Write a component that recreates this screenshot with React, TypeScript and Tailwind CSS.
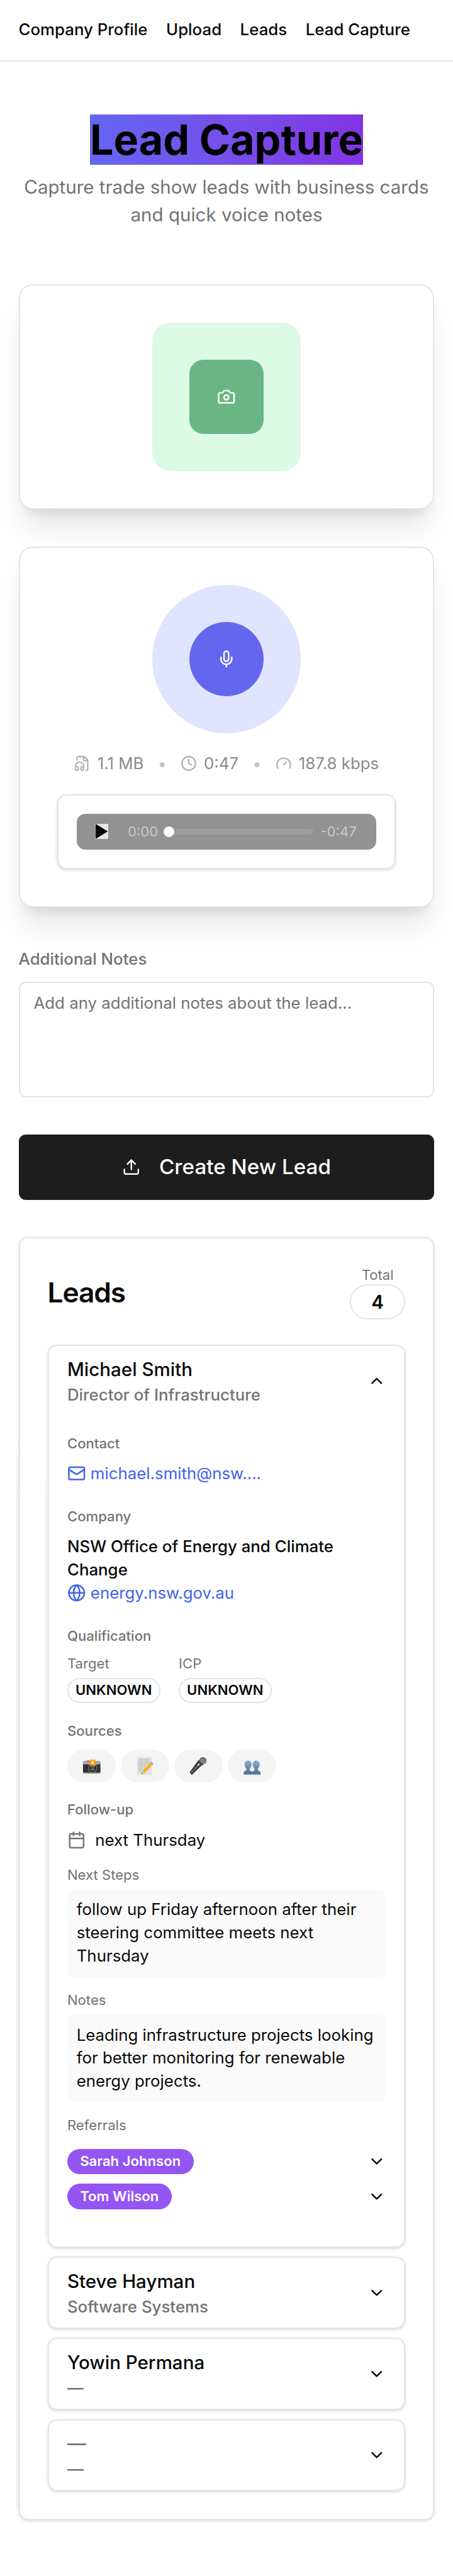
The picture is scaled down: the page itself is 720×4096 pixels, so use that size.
import type { ReactNode } from "react";
import { Calendar, Camera, ChevronDown, ChevronUp, Clock, FileHeadphone, Gauge, Globe, Mail, Mic, Upload } from "lucide-react";

const EDGE = "border-[1.1px] border-[#e4e4e4]";

function EdgeShade({ top }: { top: string }) {
  return <span className={`absolute -left-[3px] bottom-2 w-[2px] bg-linear-to-b from-transparent to-[#f1f1f1] to-[60px] ${top}`} />;
}

function Header() {
  return (
    <header className="flex h-[53px] items-center gap-4 border-b-[1.1px] border-[#e4e4e4] px-4 text-sm font-medium">
      <a>Company Profile</a>
      <a>Upload</a>
      <a>Leads</a>
      <a>Lead Capture</a>
    </header>
  );
}

function Label({ children, strong = true }: { children: ReactNode; strong?: boolean }) {
  return <div className={strong ? "text-xs font-medium text-[#737373]" : "text-xs text-[#737373]"}>{children}</div>;
}

function CaptureCards() {
  return (
    <>
      <section className={`mt-12 flex h-[194px] items-center justify-center rounded-xl bg-white shadow-xl ${EDGE}`}>
        <div className="flex size-32 items-center justify-center rounded-2xl bg-[#dcfae4]">
          <div className="flex size-16 items-center justify-center rounded-xl bg-[#69b684] text-white">
            <Camera size={16} />
          </div>
        </div>
      </section>

      <section className={`mt-8 flex h-[311px] flex-col items-center rounded-xl bg-white px-8 pt-8 shadow-xl ${EDGE}`}>
        <div className="flex size-32 items-center justify-center rounded-full bg-[#e0e4fe]">
          <div className="flex size-16 items-center justify-center rounded-full bg-[#6467ee] text-white">
            <Mic size={16} />
          </div>
        </div>
        <div className="mt-4 flex items-center gap-3 text-sm text-[#8b8b8b]">
          <span className="flex items-center gap-1.5"><FileHeadphone size={14} className="text-[#b0b0b0]" />1.1 MB</span>
          <span className="text-[#c6c6c6]">•</span>
          <span className="flex items-center gap-1.5"><Clock size={14} className="text-[#b0b0b0]" />0:47</span>
          <span className="text-[#c6c6c6]">•</span>
          <span className="flex items-center gap-1.5"><Gauge size={14} className="text-[#b0b0b0]" />187.8 kbps</span>
        </div>
        <div className={`relative mt-[16.3px] h-[65px] w-full rounded-lg p-[15.9px] shadow-sm ${EDGE}`}>
          <EdgeShade top="top-3" />
          <div className="flex h-[31px] items-center rounded-[7.5px] bg-[#929292] pl-4 pr-[17px] text-xs text-[#c9c9c9]">
            <div className="flex h-[13px] w-[11px] items-center bg-[#e5e5e5]">
              <svg viewBox="0 0 11 13" className="h-[13px] w-[11px]"><path d="M.4.6 1 .3 11 6.5 1 12.7.4 12.4Z" fill="#000" /></svg>
            </div>
            <span className="ml-[17px] w-[26px]">0:00</span>
            <div className="ml-[5px] flex h-[5px] w-[129px] items-center rounded-full bg-[#9e9e9e]">
              <div className="size-[9px] rounded-full bg-white" />
            </div>
            <span className="ml-auto">-0:47</span>
          </div>
        </div>
      </section>
    </>
  );
}

function Badge({ children }: { children: ReactNode }) {
  return <div className={`mt-1 flex h-[22px] w-20 items-center justify-center rounded-full text-xs font-semibold ${EDGE}`}>{children}</div>;
}

function SourcePill({ children }: { children: ReactNode }) {
  return (
    <span className="flex h-7 w-[42px] items-center justify-center rounded-full bg-[#f4f4f4]">
      <svg viewBox="0 0 32 32" className="size-4 overflow-visible">{children}</svg>
    </span>
  );
}

function Sources() {
  return (
    <div className="mt-2 flex gap-1">
      <SourcePill>
        <path d="M1 10q0-2 2-2h4l1-1h4l1 1h16q2 0 2 2v17.5q0 1.5-2 1.5H3q-2 0-2-1.5Z" fill="#2f2f2f" />
        <path d="M1 10q0-2 2-2h26q2 0 2 2v3.5H1Z" fill="#a8a8a8" />
        <path d="M1 27h30v.5q0 1.5-2 1.5H3q-2 0-2-1.5Z" fill="#8a8a8a" />
        <circle cx="17.5" cy="20.5" r="7.8" fill="#777" />
        <circle cx="17.5" cy="20.5" r="6.4" fill="#26282c" />
        <circle cx="17.5" cy="20.5" r="3.8" fill="#4c545e" />
        <path d="M14 22q3.5 3 7 0" stroke="#9aa3ad" strokeWidth=".9" fill="none" />
        <path d="m17 3 1.5 4.2L22.5 4l-1 4.800 4-.3-3 3 3 3.400-4.400-.5-.7 4-3-3.200-3.400 3-.4-4.400-4.600.3 3.400-3.300L9 8l4.600.4L13.500 4l3 3Z" fill="#f59a23" />
        <circle cx="17.3" cy="10.7" r="2.6" fill="#ffe86a" />
        <circle cx="27" cy="12" r="1" fill="#f2b92c" />
      </SourcePill>
      <SourcePill>
        <path d="M2 1h25.7v31H2Z" fill="#e2e2e2" />
        <path d="M4.5 5.5h20M4.5 8.5h18M4.5 11.5h19M4.5 14.5h14M4.5 17.5h12M4.5 20.5h6M4.5 23.5h7M4.5 26.5h5" stroke="#8e8e8e" strokeWidth=".9" strokeDasharray="2.5 1 4 1.2" />
        <path d="m10.2 29.8 1-6L22.7 11.3l5 4.2-11.6 12.3Z" fill="#f3c22e" />
        <path d="m14.5 25.5 11-12" stroke="#dfa01c" strokeWidth="1.5" />
        <path d="m22.7 11.3 1.5-1.6 5 4.3-1.5 1.5Z" fill="#b9b9b9" />
        <path d="m24.2 9.7.8-.6q4.6-.2 4.5 4l-.3.9Z" fill="#e57f86" />
        <path d="m10.2 29.8 1-6 4.9 4Z" fill="#e5c592" />
        <path d="m10.2 29.8.4-2.3 1.7 1.5Z" fill="#333" />
      </SourcePill>
      <SourcePill>
        <path d="m14 8.5 7.5 6.5L5 31q-.6.8-1.5.3L.8 28q-.5-.8.2-1.5Z" fill="#333" />
        <path d="m16.500 11 2.500 2.200L3 29.500 2 28Z" fill="#6f6f6f" />
        <circle cx="23.3" cy="7.2" r="6.3" fill="#6d6d6d" />
        <path d="M18.5 5.5l8 7M20.5 3l8.500 7.500M27.500 2.500l-8 9M29.300 6l-5.500 7" stroke="#a9a9a9" strokeWidth=".8" />
        <path d="m16.2 5.8 8.3 7.4-2.3 2.5-8.5-7.3Z" fill="#4a4a4a" />
        <path d="m17 6.5 7 6.2" stroke="#9c9c9c" strokeWidth=".9" />
        <circle cx="15.7" cy="14" r="1.7" fill="#d8d8d8" />
      </SourcePill>
      <SourcePill>
        <defs>
          <linearGradient id="people" x1="0" y1="0" x2="0" y2="1">
            <stop offset="0" stopColor="#8baed3" />
            <stop offset="1" stopColor="#4d6a92" />
          </linearGradient>
        </defs>
        <path d="M9 7c4 0 6 2.800 6 6.500 0 3-1 5.500-3 7.300V24c2.200.8 4 1.200 4 3 0-1.800 1.800-2.200 4-3v-3.200c-2-1.800-3-4.300-3-7.300C17 9.800 19 7 23 7s6 2.800 6 6.500c0 3-1 5.500-3 7.300V24c3 .9 4.500 1.300 4.500 4v3.500h-29V28c0-2.700 1.500-3.100 4.500-4v-3.200c-2-1.800-3-4.300-3-7.300C3 9.800 5 7 9 7Z" fill="url(#people)" />
        <path d="M1.5 30.5h29v1h-29Z" fill="#a9b6c8" />
      </SourcePill>
    </div>
  );
}

function LeadHead({ name, role, open = false }: { name: string; role: string; open?: boolean }) {
  return (
    <div className="flex items-center justify-between">
      <div>
        <div className={name === "—" ? "text-base font-medium text-[#737373]" : "text-base font-medium"}>{name}</div>
        <div className="text-sm font-medium text-[#737373]">{role}</div>
      </div>
      {open ? <ChevronUp size={16} /> : <ChevronDown size={16} />}
    </div>
  );
}

function LeadCard({ name, role }: { name: string; role: string }) {
  return (
    <div className={`relative mt-2 h-[62px] rounded-lg px-[15.9px] pt-[8.1px] shadow-sm ${EDGE}`}>
      <EdgeShade top="top-3" />
      <LeadHead name={name} role={role} />
    </div>
  );
}

function Referral({ name }: { name: string }) {
  return (
    <div className="flex h-[22px] items-center justify-between">
      <span className="flex h-[22px] items-center rounded-full bg-[#9455f3] px-[11px] text-xs font-semibold text-white">{name}</span>
      <ChevronDown size={16} />
    </div>
  );
}

function OpenLead() {
  return (
    <div className={`relative mt-[22px] h-[778px] rounded-lg px-[15.9px] pt-[8.2px] shadow-sm ${EDGE}`}>
      <EdgeShade top="top-20" />
      <LeadHead name="Michael Smith" role="Director of Infrastructure" open />

      <div className="mt-[23.9px]"><Label>Contact</Label></div>
      <a className="mt-2 flex items-center gap-1 text-sm text-[#4163eb]"><Mail size={16} />michael.smith@nsw....</a>

      <div className="mt-[19px]"><Label>Company</Label></div>
      <div className="mt-2 text-sm font-medium">NSW Office of Energy and Climate<br />Change</div>
      <a className="flex items-center gap-1 text-sm text-[#4163eb]"><Globe size={16} />energy.nsw.gov.au</a>

      <div className="mt-[19px]"><Label>Qualification</Label></div>
      <div className="mt-2 flex gap-4">
        <div><Label strong={false}>Target</Label><Badge>UNKNOWN</Badge></div>
        <div><Label strong={false}>ICP</Label><Badge>UNKNOWN</Badge></div>
      </div>

      <div className="mt-4"><Label>Sources</Label></div>
      <Sources />

      <div className="mt-4"><Label>Follow-up</Label></div>
      <div className="mt-2 flex items-center gap-2 text-sm"><Calendar size={16} className="text-[#737373]" />next Thursday</div>

      <div className="mt-3"><Label strong={false}>Next Steps</Label></div>
      <p className="mt-1 rounded-md bg-[#fafafa] p-2 text-sm">follow up Friday afternoon after their<br />steering committee meets next<br />Thursday</p>

      <div className="mt-3"><Label strong={false}>Notes</Label></div>
      <p className="mt-1 rounded-md bg-[#fafafa] p-2 text-sm">Leading infrastructure projects looking<br />for better monitoring for renewable<br />energy projects.</p>

      <div className="mt-3"><Label strong={false}>Referrals</Label></div>
      <div className="mt-3 flex flex-col gap-2">
        <Referral name="Sarah Johnson" />
        <Referral name="Tom Wilson" />
      </div>
    </div>
  );
}

export default function App() {
  return (
    <div className="h-[2220px] w-[390.24px] overflow-hidden bg-white font-['Inter',sans-serif] text-[#0a0a0a] [zoom:1.845]">
      <Header />
      <main className="px-4 pt-12">
        <h1 className="text-center text-4xl font-bold text-black">
          <span className="bg-linear-to-r from-[#6366f1] to-[#8133e2]">Lead Capture</span>
        </h1>
        <p className="mt-2 text-center text-base text-[#737373]">Capture trade show leads with business cards<br />and quick voice notes</p>

        <CaptureCards />

        <div className="mt-[34.9px] text-sm font-medium text-[#737373]">Additional Notes</div>
        <div className={`mt-[9.1px] h-[100px] rounded-md px-[11.9px] py-[7.9px] text-sm text-[#737373] ${EDGE}`}>Add any additional notes about the lead...</div>

        <button className="mt-8 flex h-14 w-full items-center justify-center gap-4 rounded-md bg-[#1d1d1d] text-lg font-medium text-[#fafafa]">
          <Upload size={16} />Create New Lead
        </button>

        <section className={`relative mt-8 h-[1106px] rounded-lg px-[23.9px] pt-[23.9px] shadow-sm ${EDGE}`}>
          <EdgeShade top="top-40" />
          <div className="flex items-center justify-between">
            <h2 className="text-2xl font-semibold tracking-tight">Leads</h2>
            <div className="text-center">
              <Label strong={false}>Total</Label>
              <div className={`flex h-[30px] w-12 items-center justify-center rounded-full text-base font-semibold ${EDGE}`}>4</div>
            </div>
          </div>
          <OpenLead />
          <LeadCard name="Steve Hayman" role="Software Systems" />
          <LeadCard name="Yowin Permana" role="—" />
          <LeadCard name="—" role="—" />
        </section>
      </main>
    </div>
  );
}
